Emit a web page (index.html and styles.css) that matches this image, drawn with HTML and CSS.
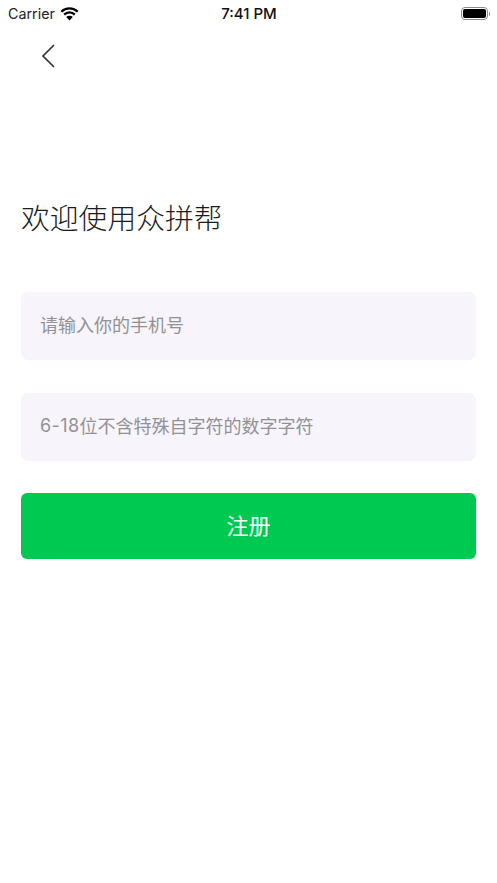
FILE: index.html
```html
<!DOCTYPE html>
<html lang="zh-CN">
<head>
<meta charset="utf-8">
<title>欢迎使用众拼帮</title>
<link rel="stylesheet" href="styles.css">
</head>
<body>
<div class="page">
  <div class="status">
    <div class="status-left">
      <span class="carrier">Carrier</span>
      <svg class="wifi" width="19" height="14" viewBox="0 0 19 14"><path d="M1.300 4.700 A11.600 11.600 0 0 1 17.700 4.700" fill="none" stroke="#000" stroke-width="2.300"/><path d="M4.200 7.600 A7.500 7.500 0 0 1 14.800 7.600" fill="none" stroke="#000" stroke-width="2.300"/><path d="M6.200 10 L9.500 13.600 L12.800 10 A4.700 4.700 0 0 0 6.200 10 Z" fill="#000"/></svg>
    </div>
    <span class="time">7:41 PM</span>
    <div class="battery">
      <div class="battery-body"><div class="battery-fill"></div></div>
      <div class="battery-cap"></div>
    </div>
  </div>
  <div class="nav">
    <svg class="back" width="14" height="24" viewBox="0 0 14 24"><path d="M13 1 L2 12 L13 23" fill="none" stroke="#333" stroke-width="1.700"/></svg>
  </div>
  <h1 class="title">欢迎使用众拼帮</h1>
  <div class="field">请输入你的手机号</div>
  <div class="field"><span class="num">6-18</span>位不含特殊自字符的数字字符</div>
  <div class="submit">注册</div>
</div>
</body>
</html>
```
FILE: styles.css
```css
html, body {
  margin: 0;
  padding: 0;
  background: #fff;
}
.page {
  width: 497px;
  height: 883px;
  overflow: hidden;
  font-family: Inter, "Noto Sans CJK SC", sans-serif;
  box-sizing: border-box;
}
.status {
  height: 27px;
  padding: 0 7px 0 8px;
  display: grid;
  grid-template-columns: 1fr auto 1fr;
  align-items: center;
  color: #111;
  font-family: Inter, "Liberation Sans", sans-serif;
}
.status-left {
  display: flex;
  align-items: center;
  gap: 5px;
}
.carrier {
  font-size: 14.300px;
  color: #222;
}
.wifi {
  display: block;
}
.time {
  font-size: 15px;
  font-weight: 500;
}
.battery {
  justify-self: end;
  display: flex;
  align-items: center;
  gap: 1px;
}
.battery-body {
  width: 27px;
  height: 13px;
  box-sizing: border-box;
  border: 1px solid #8a8a8a;
  border-radius: 4px;
  padding: 1px;
}
.battery-fill {
  height: 100%;
  background: #000;
  border-radius: 2px;
}
.battery-cap {
  width: 1.500px;
  height: 4px;
  background: #8a8a8a;
  border-radius: 0 1px 1px 0;
}
.nav {
  height: 57px;
  padding-left: 41px;
  display: flex;
  align-items: flex-start;
  padding-top: 17px;
  box-sizing: border-box;
}
.title {
  margin: 113px 21px 0;
  font-size: 28.800px;
  font-weight: 300;
  line-height: 44px;
  color: #1c1c1c;
}
.field {
  margin: 51px 21px 0;
  height: 68px;
  padding: 0 0 4px 19px;
  box-sizing: border-box;
  display: flex;
  align-items: center;
  background: #f7f4fc;
  border-radius: 7px;
  font-size: 18px;
  font-weight: 400;
  color: #929294;
}
.field + .field {
  margin-top: 33px;
}
.num {
  letter-spacing: 0.400px;
}
.submit {
  margin: 32px 21px 0;
  height: 66px;
  padding-bottom: 4px;
  box-sizing: border-box;
  display: flex;
  align-items: center;
  justify-content: center;
  background: #00c952;
  border-radius: 6px;
  color: #fff;
  font-size: 22px;
  font-weight: 400;
}
```
